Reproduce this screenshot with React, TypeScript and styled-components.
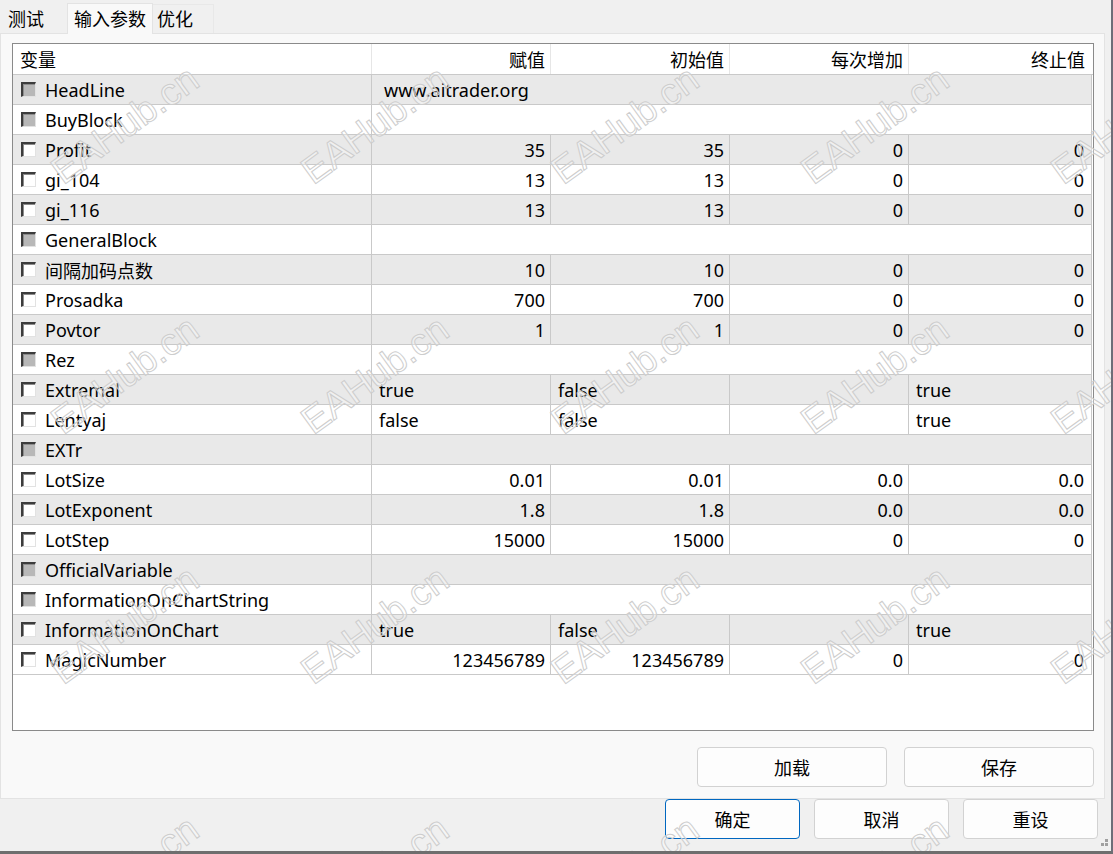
import styled, { createGlobalStyle } from "styled-components";

const GlobalStyle = createGlobalStyle`
  html, body {
    margin: 0;
    padding: 0;
    background: #f0f0f0;
  }
  body {
    font-family: "Noto Sans", "Noto Sans CJK SC", sans-serif;
    font-size: 18px;
    color: #000;
  }
`;

type Row = {
  name: string;
  group?: boolean;
  text?: boolean;
  value?: string;
  start?: string;
  step?: string;
  stop?: string;
};

const ROWS: Row[] = [
  { name: "HeadLine", group: true, value: "www.aitrader.org" },
  { name: "BuyBlock", group: true },
  { name: "Profit", value: "35", start: "35", step: "0", stop: "0" },
  { name: "gi_104", value: "13", start: "13", step: "0", stop: "0" },
  { name: "gi_116", value: "13", start: "13", step: "0", stop: "0" },
  { name: "GeneralBlock", group: true },
  { name: "间隔加码点数", value: "10", start: "10", step: "0", stop: "0" },
  { name: "Prosadka", value: "700", start: "700", step: "0", stop: "0" },
  { name: "Povtor", value: "1", start: "1", step: "0", stop: "0" },
  { name: "Rez", group: true },
  { name: "Extremal", text: true, value: "true", start: "false", step: "", stop: "true" },
  { name: "Lentyaj", text: true, value: "false", start: "false", step: "", stop: "true" },
  { name: "EXTr", group: true },
  { name: "LotSize", value: "0.01", start: "0.01", step: "0.0", stop: "0.0" },
  { name: "LotExponent", value: "1.8", start: "1.8", step: "0.0", stop: "0.0" },
  { name: "LotStep", value: "15000", start: "15000", step: "0", stop: "0" },
  { name: "OfficialVariable", group: true },
  { name: "InformationOnChartString", group: true },
  { name: "InformationOnChart", text: true, value: "true", start: "false", step: "", stop: "true" },
  { name: "MagicNumber", value: "123456789", start: "123456789", step: "0", stop: "0" },
];

const COLS = "359px 179px 179px 179px 183px";

const Window = styled.div`
  position: relative;
  width: 1111px;
  height: 851px;
  border-right: 2px solid #6e6e78;
  border-bottom: 3px solid #6e6e6e;
  background: #f0f0f0;
  display: flex;
  flex-direction: column;
  overflow: hidden;
`;

const TabBar = styled.div`
  height: 33px;
  display: flex;
  align-items: flex-end;
`;

const Tab = styled.div<{ $active?: boolean }>`
  height: ${(p) => (p.$active ? 31 : 29)}px;
  box-sizing: border-box;
  padding: 0 ${(p) => (p.$active ? 6 : 22)}px 3px ${(p) => (p.$active ? 6 : 7)}px;
  display: flex;
  align-items: center;
  background: ${(p) => (p.$active ? "#f9f9f9" : "#f0f0f0")};
  border: 1px solid ${(p) => (p.$active ? "#e3e3e3" : "#f0f0f0")};
  border-bottom: none;
  margin-bottom: ${(p) => (p.$active ? -1 : 0)}px;
  position: relative;
  z-index: ${(p) => (p.$active ? 1 : 0)};
  &:last-child {
    border-color: #e8e8e8;
    border-left: none;
    padding-left: 4px;
    padding-right: 20px;
  }
`;

const Panel = styled.div`
  width: 1105px;
  height: 766px;
  box-sizing: border-box;
  background: #f9f9f9;
  border: 1px solid #e3e3e3;
  padding: 9px 10px 0 11px;
  display: flex;
  flex-direction: column;
`;

const Table = styled.div`
  height: 688px;
  box-sizing: border-box;
  border: 1px solid #8a8a8a;
  background: #fff;
  overflow: hidden;
`;

const HeaderRow = styled.div`
  display: grid;
  grid-template-columns: ${COLS};
  height: 31px;
  box-sizing: border-box;
  border-bottom: 1px solid #c9c9c9;
`;

const HeadCell = styled.div<{ $left?: boolean }>`
  display: flex;
  align-items: center;
  justify-content: ${(p) => (p.$left ? "flex-start" : "flex-end")};
  padding: 0 5px 0 7px;
  border-right: 1px solid #e6e6e6;
  &:last-child {
    border-right: none;
    padding-right: 7px;
  }
`;

const BodyRow = styled.div<{ $odd: boolean }>`
  display: grid;
  grid-template-columns: ${COLS};
  height: 30px;
  box-sizing: border-box;
  border-bottom: 1px solid #c9c9c9;
  background: ${(p) => (p.$odd ? "#e9e9e9" : "#fff")};
  width: 1079px;
`;

const NameCell = styled.div`
  display: flex;
  align-items: center;
  gap: 9px;
  padding-left: 8px;
  border-right: 1px solid #c9c9c9;
  white-space: nowrap;
`;

const ValueCell = styled.div<{ $left?: boolean; $span?: boolean }>`
  grid-column: ${(p) => (p.$span ? "span 4" : "auto")};
  display: flex;
  align-items: center;
  justify-content: ${(p) => (p.$left ? "flex-start" : "flex-end")};
  padding: ${(p) => (p.$span ? "0 0 0 12px" : p.$left ? "0 0 0 7px" : "0 5px 0 0")};
  border-right: 1px solid #c9c9c9;
  white-space: nowrap;
  &:last-child {
    padding-right: ${(p) => (p.$left || p.$span ? 0 : 7)}px;
  }
`;

const Check = styled.span<{ $group?: boolean }>`
  width: 15px;
  height: 15px;
  box-sizing: border-box;
  flex: none;
  border-style: solid;
  border-width: 2px 1px 1px 2px;
  border-color: #3c3c3c #e2e2e2 #e2e2e2 #3c3c3c;
  box-shadow: inset 1px 1px 0 #8c8c8c;
  background: ${(p) => (p.$group ? "#b8b8b8" : "#fff")};
`;

const ButtonRow = styled.div`
  display: flex;
  justify-content: flex-end;
  gap: 17px;
  margin-top: 16px;
`;

const Button = styled.button<{ $w: number; $primary?: boolean }>`
  width: ${(p) => p.$w}px;
  height: 40px;
  box-sizing: border-box;
  border: 1px solid ${(p) => (p.$primary ? "#0067c0" : "#d2d2d2")};
  border-radius: 4px;
  background: #fdfdfd;
  font: inherit;
  font-size: 18px;
  color: #000;
  padding: 0;
`;

const Footer = styled.div`
  display: flex;
  justify-content: flex-end;
  gap: 14px;
  padding-right: 13px;
`;

const Grip = styled.svg`
  position: absolute;
  right: 1px;
  bottom: 1px;
`;

const Mark = styled.div`
  position: absolute;
  pointer-events: none;
  font-family: "Liberation Sans", sans-serif;
  font-size: 38px;
  white-space: nowrap;
  color: rgba(255, 255, 255, 0.35);
  -webkit-text-stroke: 1px #cdcdcd;
  transform: translate(-50%, -50%) rotate(-36deg);
  z-index: 5;
`;

const marks: { x: number; y: number }[] = [];
for (let r = 0; r < 4; r++) {
  for (let c = 0; c < 5; c++) {
    marks.push({ x: 125 + c * 250, y: 125 + r * 250 });
  }
}

export default function App() {
  return (
    <>
      <GlobalStyle />
      <Window>
        <TabBar>
          <Tab>测试</Tab>
          <Tab $active>输入参数</Tab>
          <Tab>优化</Tab>
        </TabBar>
        <Panel>
          <Table>
            <HeaderRow>
              <HeadCell $left>变量</HeadCell>
              <HeadCell>赋值</HeadCell>
              <HeadCell>初始值</HeadCell>
              <HeadCell>每次增加</HeadCell>
              <HeadCell>终止值</HeadCell>
            </HeaderRow>
            {ROWS.map((row, i) => (
              <BodyRow key={row.name} $odd={i % 2 === 0}>
                <NameCell>
                  <Check $group={row.group} />
                  {row.name}
                </NameCell>
                {row.group ? (
                  <ValueCell $span $left>
                    {row.value}
                  </ValueCell>
                ) : (
                  <>
                    <ValueCell $left={row.text}>{row.value}</ValueCell>
                    <ValueCell $left={row.text}>{row.start}</ValueCell>
                    <ValueCell $left={row.text}>{row.step}</ValueCell>
                    <ValueCell $left={row.text}>{row.stop}</ValueCell>
                  </>
                )}
              </BodyRow>
            ))}
          </Table>
          <ButtonRow>
            <Button $w={190}>加载</Button>
            <Button $w={190}>保存</Button>
          </ButtonRow>
        </Panel>
        <Footer>
          <Button $w={135} $primary>
            确定
          </Button>
          <Button $w={135}>取消</Button>
          <Button $w={135}>重设</Button>
        </Footer>
        <Grip width="12" height="12" viewBox="0 0 12 12">
          <rect x="7" y="1" width="3" height="3" fill="#a0a0a0" />
          <rect x="3" y="5" width="3" height="3" fill="#a0a0a0" />
          <rect x="7" y="5" width="3" height="3" fill="#a0a0a0" />
        </Grip>
        {marks.map((m) => (
          <Mark key={`${m.x}-${m.y}`} style={{ left: m.x, top: m.y }}>
            EAHub.cn
          </Mark>
        ))}
      </Window>
    </>
  );
}
